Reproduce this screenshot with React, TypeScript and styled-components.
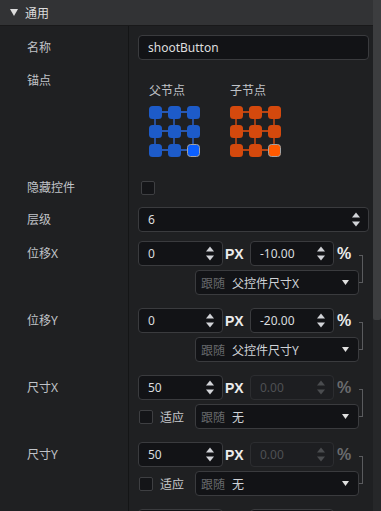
import React from 'react';
import styled, { createGlobalStyle } from 'styled-components';

const Global = createGlobalStyle`
  html, body { margin: 0; padding: 0; background: #1f2022; overflow: hidden; }
  body {
    font-family: "Noto Sans", "Noto Sans CJK SC", sans-serif;
    font-size: 12px;
    color: #c2c4c8;
  }
  * { box-sizing: border-box; }
`;

const Frame = styled.div`
  display: flex;
  width: 381px;
  height: 511px;
  overflow: hidden;
  background: #1f2022;
`;

const Main = styled.div`
  width: 373px;
  display: flex;
  flex-direction: column;
`;

const Header = styled.div`
  height: 26px;
  flex: none;
  background: #323335;
  border-bottom: 1px solid #19191a;
  display: flex;
  align-items: center;
  padding-left: 10px;
  gap: 7px;
  color: #dcdcdc;
  font-size: 12px;
`;

const Content = styled.div`
  flex: 1;
  background-image: linear-gradient(
    to right,
    transparent 128px,
    #141516 128px,
    #141516 129px,
    transparent 129px
  );
`;

const Row = styled.div<{ $pt: number }>`
  display: grid;
  grid-template-columns: 129px 1fr;
  padding-top: ${(p) => p.$pt}px;
`;

const Label = styled.div`
  padding-left: 27px;
  height: 25px;
  line-height: 25px;
  color: #c0c3c8;
  white-space: nowrap;
`;

const Value = styled.div`
  padding-left: 9px;
  padding-right: 4px;
  min-width: 0;
`;

const TextBox = styled.div`
  height: 25px;
  display: flex;
  align-items: center;
  justify-content: space-between;
  padding: 0 8px 0 9px;
  border: 1px solid #3a3b3e;
  border-radius: 4px;
  background: #121316;
  color: #dedede;
`;

const NumBox = styled.div<{ $w: number; $disabled?: boolean }>`
  width: ${(p) => p.$w}px;
  flex: none;
  height: 25px;
  display: flex;
  align-items: center;
  justify-content: space-between;
  padding: 0 8px 0 9px;
  border: 1px solid ${(p) => (p.$disabled ? '#2c2d30' : '#3a3b3e')};
  border-radius: 4px;
  background: ${(p) => (p.$disabled ? '#1d1e21' : '#121316')};
  color: ${(p) => (p.$disabled ? '#4e5053' : '#dadcdf')};
`;

const Unit = styled.div`
  width: 27px;
  flex: none;
  padding-left: 2px;
  font-family: "Liberation Sans", "Noto Sans", sans-serif;
  font-weight: bold;
  font-size: 14px;
  color: #ececec;
`;

const Percent = styled.div<{ $disabled?: boolean }>`
  padding-left: 3px;
  font-family: "Liberation Sans", "Noto Sans", sans-serif;
  font-weight: bold;
  font-size: 16px;
  color: ${(p) => (p.$disabled ? '#6a6b6e' : '#ececec')};
`;

const Block = styled.div`
  display: flex;
  align-items: flex-start;
`;

const Lines = styled.div`
  width: 221px;
  display: flex;
  flex-direction: column;
  gap: 4px;
`;

const Line = styled.div`
  display: flex;
  align-items: center;
  height: 25px;
`;

const Bracket = styled.div`
  width: 4px;
  height: 28px;
  margin-top: 14px;
  border: 1px solid #5a5b5e;
  border-left: none;
`;

const Dropdown = styled.div`
  width: 164px;
  height: 25px;
  margin-left: auto;
  display: flex;
  align-items: center;
  padding: 0 9px 0 5px;
  border: 1px solid #3a3b3e;
  border-radius: 4px;
  background: #121316;
`;

const Follow = styled.span`
  color: #66686b;
`;

const DropValue = styled.span`
  margin-left: 7px;
  color: #cfd2d6;
`;

const Caret = styled.svg`
  margin-left: auto;
  flex: none;
`;

const Check = styled.div<{ $ml: number }>`
  width: 14px;
  height: 14px;
  flex: none;
  margin-left: ${(p) => p.$ml}px;
  border: 1px solid #3e3f42;
  border-radius: 2px;
  background: #141518;
`;

const CheckCell = styled.div`
  height: 25px;
  display: flex;
  align-items: center;
`;

const CheckText = styled.span`
  margin-left: 7px;
  color: #c8cacd;
`;

const AnchorPanel = styled.div`
  display: flex;
  gap: 30px;
  padding-left: 11px;
  padding-top: 15px;
`;

const AnchorCol = styled.div`
  display: flex;
  flex-direction: column;
  gap: 7px;
`;

const Caption = styled.div`
  line-height: 16px;
  color: #c0c3c8;
`;

const Scrollbar = styled.div`
  width: 8px;
  background: #262729;
  display: flex;
  flex-direction: column;
`;

const Thumb = styled.div`
  height: 320px;
  background: #3c3d3f;
  border-radius: 0 0 2px 2px;
`;

const Spinner = ({ color = '#d2d4d8' }: { color?: string }) => (
  <svg width="8" height="15" viewBox="0 0 8 15">
    <polygon points="0,5.5 4,0.5 8,5.5" fill={color} />
    <polygon points="0,9.5 4,14.5 8,9.5" fill={color} />
  </svg>
);

const CaretIcon = () => (
  <Caret width="7" height="5" viewBox="0 0 7 5">
    <polygon points="0,0 7,0 3.5,5" fill="#e0e0e0" />
  </Caret>
);

const AnchorGrid = ({ fill, line, active }: { fill: string; line: string; active: string }) => {
  const pos = [0, 19, 38];
  return (
    <svg width="51" height="51" viewBox="0 0 51 51">
      {pos.map((y) => (
        <line key={'h' + y} x1={6} y1={y + 6} x2={44} y2={y + 6} stroke={line} strokeWidth={1.3} />
      ))}
      {pos.map((x) => (
        <line key={'v' + x} x1={x + 6} y1={6} x2={x + 6} y2={44} stroke={line} strokeWidth={1.3} />
      ))}
      {pos.map((y) =>
        pos.map((x) =>
          x === 38 && y === 38 ? (
            <rect key={x + '-' + y} x={x + 0.5} y={y + 0.5} width={12} height={12} rx={3} fill={active} stroke="#a3a3a3" strokeWidth={1} />
          ) : (
            <rect key={x + '-' + y} x={x} y={y} width={13} height={13} rx={3.5} fill={fill} />
          )
        )
      )}
    </svg>
  );
};

const OffsetRow = ({ label, px, pct, follow, pt }: { label: string; px: string; pct: string; follow: string; pt: number }) => (
  <Row $pt={pt}>
    <Label>{label}</Label>
    <Value>
      <Block>
        <Lines>
          <Line>
            <NumBox $w={85}>
              <span>{px}</span>
              <Spinner />
            </NumBox>
            <Unit>PX</Unit>
            <NumBox $w={84}>
              <span>{pct}</span>
              <Spinner />
            </NumBox>
            <Percent>%</Percent>
          </Line>
          <Line>
            <Dropdown>
              <Follow>跟随</Follow>
              <DropValue>{follow}</DropValue>
              <CaretIcon />
            </Dropdown>
          </Line>
        </Lines>
        <Bracket />
      </Block>
    </Value>
  </Row>
);

const SizeRow = ({ label, px, pt }: { label: string; px: string; pt: number }) => (
  <Row $pt={pt}>
    <Label>{label}</Label>
    <Value>
      <Block>
        <Lines>
          <Line>
            <NumBox $w={85}>
              <span>{px}</span>
              <Spinner />
            </NumBox>
            <Unit>PX</Unit>
            <NumBox $w={84} $disabled>
              <span>0.00</span>
              <Spinner color="#4a4c4f" />
            </NumBox>
            <Percent $disabled>%</Percent>
          </Line>
          <Line>
            <Check $ml={1} />
            <CheckText>适应</CheckText>
            <Dropdown>
              <Follow>跟随</Follow>
              <DropValue>无</DropValue>
              <CaretIcon />
            </Dropdown>
          </Line>
        </Lines>
        <Bracket />
      </Block>
    </Value>
  </Row>
);

const TailRow = ({ pt }: { pt: number }) => (
  <Row $pt={pt}>
    <Label />
    <Value>
      <Line>
        <NumBox $w={85} />
        <Unit />
        <NumBox $w={84} />
      </Line>
    </Value>
  </Row>
);

export default function App() {
  return (
    <>
      <Global />
      <Frame>
        <Main>
          <Header>
            <svg width="8" height="7" viewBox="0 0 8 7">
              <polygon points="0,0 8,0 4,7" fill="#dcdcdc" />
            </svg>
            <span>通用</span>
          </Header>
          <Content>
            <Row $pt={9}>
              <Label>名称</Label>
              <Value>
                <TextBox>shootButton</TextBox>
              </Value>
            </Row>
            <Row $pt={8}>
              <Label>锚点</Label>
              <Value>
                <AnchorPanel>
                  <AnchorCol>
                    <Caption>父节点</Caption>
                    <AnchorGrid fill="#1d5bc9" line="#2e6be0" active="#0b5fff" />
                  </AnchorCol>
                  <AnchorCol>
                    <Caption>子节点</Caption>
                    <AnchorGrid fill="#d4490d" line="#e8500f" active="#ff5a00" />
                  </AnchorCol>
                </AnchorPanel>
              </Value>
            </Row>
            <Row $pt={18}>
              <Label>隐藏控件</Label>
              <Value>
                <CheckCell>
                  <Check $ml={3} />
                </CheckCell>
              </Value>
            </Row>
            <Row $pt={7}>
              <Label>层级</Label>
              <Value>
                <TextBox>
                  <span>6</span>
                  <Spinner />
                </TextBox>
              </Value>
            </Row>
            <OffsetRow pt={9} label="位移X" px="0" pct="-10.00" follow="父控件尺寸X" />
            <OffsetRow pt={13} label="位移Y" px="0" pct="-20.00" follow="父控件尺寸Y" />
            <SizeRow pt={13} label="尺寸X" px="50" />
            <SizeRow pt={13} label="尺寸Y" px="50" />
            <TailRow pt={13} />
          </Content>
        </Main>
        <Scrollbar>
          <Thumb />
        </Scrollbar>
      </Frame>
    </>
  );
}
